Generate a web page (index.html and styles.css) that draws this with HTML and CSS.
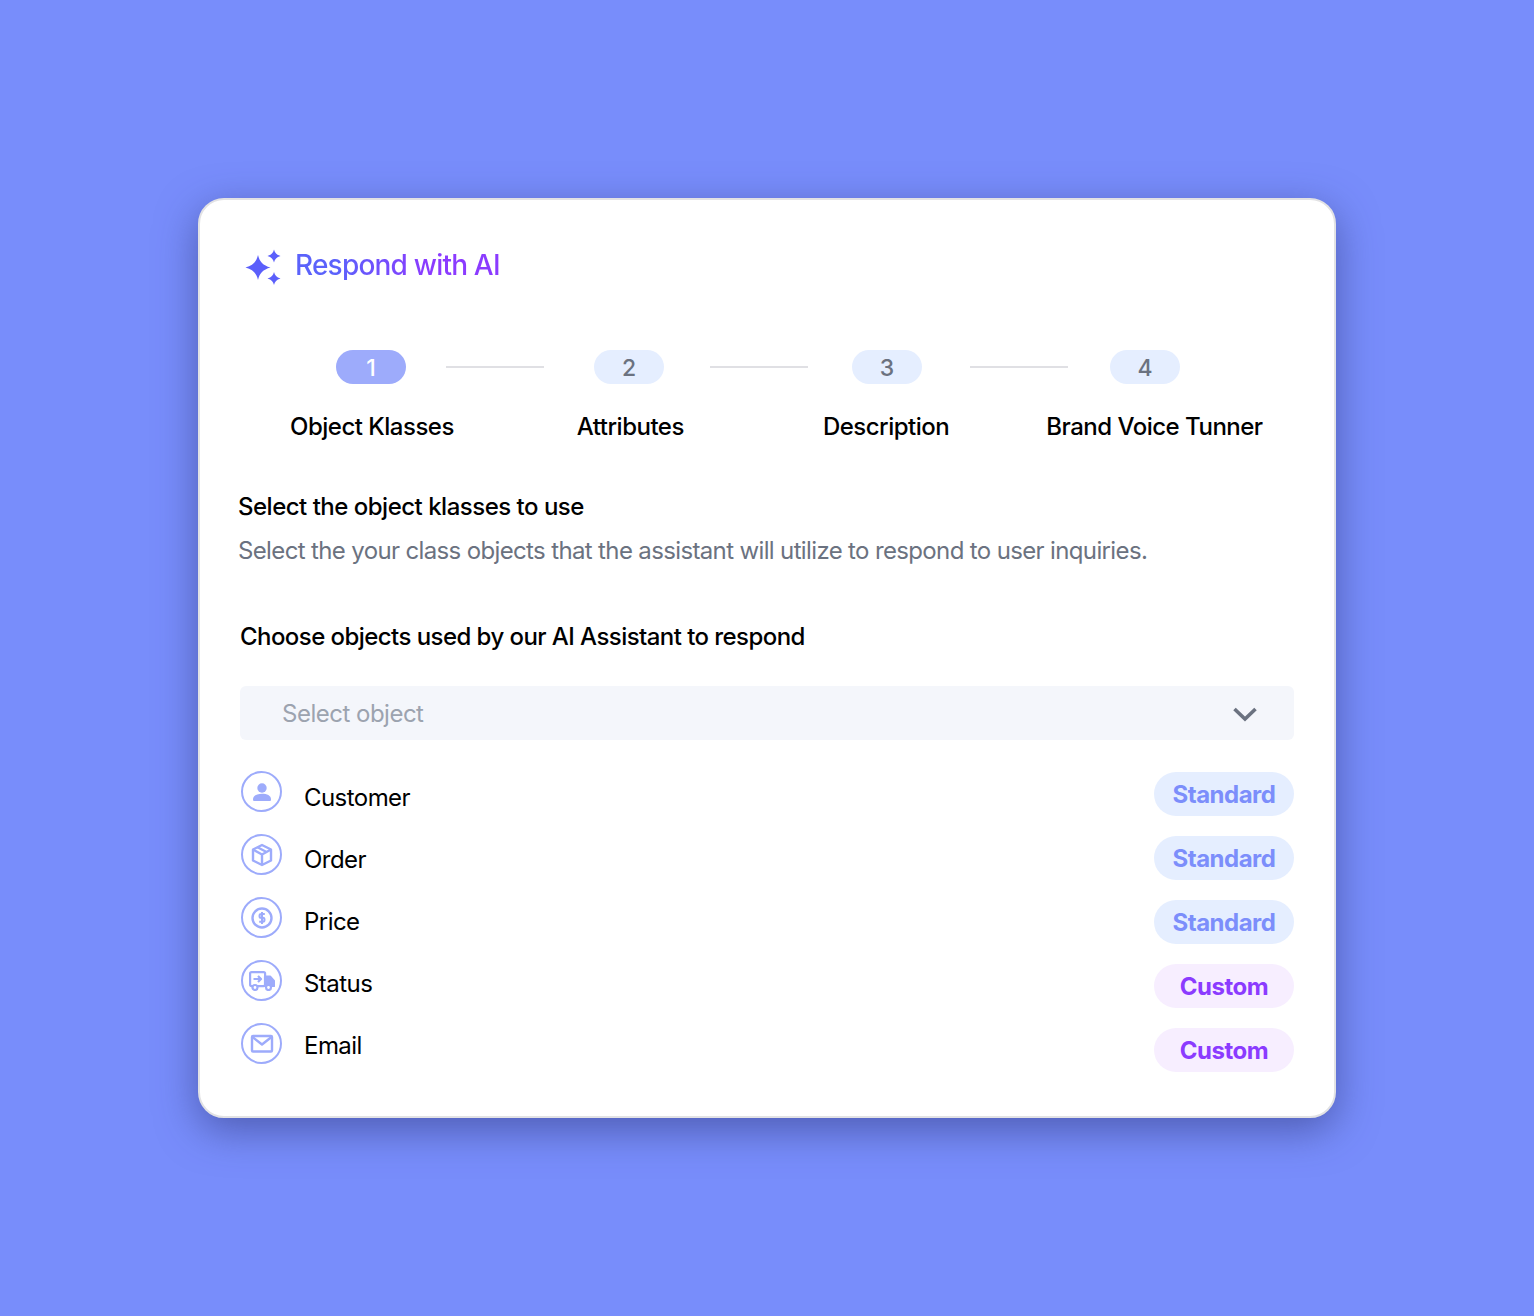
FILE: index.html
```html
<!DOCTYPE html>
<html lang="en">
<head>
  <meta charset="UTF-8" />
  <meta name="viewport" content="width=device-width, initial-scale=1.0" />
  <title>Respond with AI</title>
  <link rel="stylesheet" href="styles.css">
</head>
<body>
  <div class="card">
    <div class="card-head">
      <svg class="sparkle" width="38" height="38" viewBox="0 0 38 38" fill="#5b5ffb">
        <path d="M14 6 C15.500 12.500 19 16.500 26.500 18.500 C19 20.500 15.500 24.500 14 31 C12.500 24.500 9 20.500 1.500 18.500 C9 16.500 12.500 12.500 14 6Z"/>
        <path d="M30 0.500 C30.800 3.800 32.500 5.800 36.500 7 C32.500 8.200 30.800 10.200 30 13.500 C29.200 10.200 27.500 8.200 23.500 7 C27.500 5.800 29.200 3.800 30 0.500Z"/>
        <path d="M30 23 C30.800 26.300 32.500 28.300 36.500 29.500 C32.500 30.700 30.800 32.700 30 36 C29.200 32.700 27.500 30.700 23.500 29.500 C27.500 28.300 29.200 26.300 30 23Z"/>
      </svg>
      <span class="card-title">Respond with AI</span>
    </div>

    <div class="steps">
      <span class="step-num active">1</span>
      <span class="step-line line-a"></span>
      <span class="step-num">2</span>
      <span class="step-line line-b"></span>
      <span class="step-num">3</span>
      <span class="step-line line-c"></span>
      <span class="step-num">4</span>
    </div>
    <div class="step-labels">
      <span>Object Klasses</span>
      <span>Attributes</span>
      <span class="label-3">Description</span>
      <span class="label-4">Brand Voice Tunner</span>
    </div>

    <h2 class="intro-title">Select the object klasses to use</h2>
    <p class="intro-text">Select the your class objects that the assistant will utilize to respond to user inquiries.</p>

    <div class="picker">
      <h3 class="picker-title">Choose objects used by our AI Assistant to respond</h3>
      <div class="select">
        <span>Select object</span>
        <svg class="chevron" width="24" height="15" viewBox="0 0 24 15" fill="none" stroke="#6b7280" stroke-width="3.600">
          <path d="M1.500 2 L12 12 L22.500 2"/>
        </svg>
      </div>

      <div class="objects">
        <div class="object-icons">
          <span class="object-icon">
            <svg width="24" height="24" viewBox="0 0 24 24" fill="#9dabfb">
              <circle cx="12" cy="8" r="4.700"/>
              <path d="M3 19.500 C3 15.500 7 13.800 12 13.800 C17 13.800 21 15.500 21 19.500 C21 20.500 20.500 21 19.500 21 H4.500 C3.500 21 3 20.500 3 19.500Z"/>
            </svg>
          </span>
          <span class="object-icon">
            <svg width="24" height="24" viewBox="0 0 24 24" fill="none" stroke="#9dabfb" stroke-width="2.400" stroke-linejoin="round">
              <path d="M12 2 L21 6.500 V17.500 L12 22 L3 17.500 V6.500Z"/>
              <path d="M3 6.500 L12 11.500 L21 6.500 M12 11.500 V22 M7.500 4.300 L16.500 9"/>
            </svg>
          </span>
          <span class="object-icon">
            <svg width="24" height="24" viewBox="0 0 24 24" fill="none" stroke="#9dabfb" stroke-width="2.400">
              <circle cx="12" cy="12" r="9.500"/>
              <path d="M14.800 8 H11 C9 8 9 11.800 11 11.800 H13 C15 11.800 15 15.800 13 15.800 H9.200 M12 6 V18" stroke-width="2"/>
            </svg>
          </span>
          <span class="object-icon">
            <svg width="26" height="20" viewBox="0 0 26 20" fill="none" stroke="#9dabfb" stroke-width="2.200" stroke-linejoin="round">
              <rect x="1.100" y="1.100" width="15" height="14" rx="1.500"/>
              <path d="M16 5.500 H21 L25 10 V15 H16Z" fill="#9dabfb"/>
              <circle cx="6" cy="16.500" r="2.500" fill="#fff"/>
              <circle cx="19.500" cy="16.500" r="2.500" fill="#fff"/>
              <path d="M4.500 8 H12 M9 5 L12 8 L9 11"/>
            </svg>
          </span>
          <span class="object-icon">
            <svg width="24" height="20" viewBox="0 0 24 20" fill="none" stroke="#9dabfb" stroke-width="2.400" stroke-linejoin="round">
              <rect x="2" y="2" width="20" height="15.500" rx="1"/>
              <path d="M2.500 3 L12 10.500 L21.500 3"/>
            </svg>
          </span>
        </div>

        <ul class="object-names">
          <li>Customer</li>
          <li>Order</li>
          <li>Price</li>
          <li>Status</li>
          <li>Email</li>
        </ul>

        <div class="object-tags">
          <span class="tag">Standard</span>
          <span class="tag">Standard</span>
          <span class="tag">Standard</span>
          <span class="tag custom">Custom</span>
          <span class="tag custom">Custom</span>
        </div>
      </div>
    </div>
  </div>
</body>
</html>
```

FILE: styles.css
```css
body {
  margin: 0;
  height: 1316px;
  background-color: #788dfb;
  font-family: Inter, "Liberation Sans", sans-serif;
  color: #000;
  display: flex;
  justify-content: center;
  align-items: flex-start;
  overflow: hidden;
}

.card {
  box-sizing: border-box;
  width: 1138px;
  height: 920px;
  margin-top: 198px;
  padding: 50px 40px 0 38px;
  background-color: #fff;
  border: 2px solid #e2e2e4;
  border-radius: 26px;
  box-shadow: 0 12px 40px rgba(50, 60, 130, 0.6);
}

.card-head {
  display: flex;
  align-items: flex-start;
  gap: 13px;
  margin-left: 6px;
  height: 38px;
}

.sparkle {
  margin-top: -1px;
}

.card-title {
  font-size: 28px;
  font-weight: 500;
  line-height: 30px;
  letter-spacing: -0.8px;
  background: linear-gradient(90deg, #5b62fb 20%, #8b3bff 65%);
  -webkit-background-clip: text;
  background-clip: text;
  color: transparent;
}

.steps {
  display: flex;
  align-items: center;
  margin-top: 62px;
  margin-left: 98px;
}

.step-num {
  width: 70px;
  height: 34px;
  border-radius: 17px;
  background-color: #e5eeff;
  color: #6b7280;
  font-size: 23px;
  font-weight: 500;
  line-height: 36px;
  text-align: center;
}

.step-num.active {
  background-color: #9dabfb;
  color: #fff;
}

.step-line {
  width: 98px;
  height: 2px;
  background-color: #e0e0e4;
}

.line-a {
  margin: 0 50px 0 40px;
}

.line-b {
  margin: 0 44px 0 46px;
}

.line-c {
  margin: 0 42px 0 48px;
}

.step-labels {
  display: flex;
  gap: 123px;
  margin-top: 27px;
  margin-left: 52px;
  font-size: 24px;
  font-weight: 500;
  line-height: 32px;
  letter-spacing: -0.5px;
  white-space: nowrap;
}

.label-3 {
  margin-left: 16px;
}

.label-4 {
  margin-left: -26px;
}

.intro-title {
  margin: 48px 0 0;
  font-size: 24px;
  font-weight: 500;
  line-height: 32px;
  letter-spacing: -0.5px;
}

.intro-text {
  margin: 12px 0 0;
  font-size: 24px;
  line-height: 32px;
  letter-spacing: -0.64px;
  color: #6b7280;
}

.picker {
  margin-left: 2px;
}

.picker-title {
  margin: 54px 0 0;
  font-size: 24px;
  font-weight: 500;
  line-height: 32px;
  letter-spacing: -0.56px;
}

.select {
  display: flex;
  align-items: center;
  justify-content: space-between;
  height: 54px;
  margin-top: 33px;
  padding: 0 37px 0 42px;
  background-color: #f4f6fb;
  border-radius: 6px;
  font-size: 24px;
  letter-spacing: -0.5px;
  color: #9ca3af;
}

.chevron {
  margin-top: 2px;
}

.objects {
  display: flex;
  align-items: flex-start;
  margin-top: 32px;
}

.object-icons {
  display: flex;
  flex-direction: column;
  gap: 22px;
  margin: -1px 0 0 1px;
}

.object-icon {
  box-sizing: border-box;
  width: 41px;
  height: 41px;
  border: 2px solid #9dabfb;
  border-radius: 50%;
  display: flex;
  align-items: center;
  justify-content: center;
}

.object-names {
  list-style: none;
  flex: 1;
  margin: 10px 0 0 22px;
  padding: 0;
  display: flex;
  flex-direction: column;
  gap: 30px;
  font-size: 24px;
  line-height: 32px;
  letter-spacing: -0.55px;
}

.object-tags {
  display: flex;
  flex-direction: column;
  gap: 20px;
}

.tag {
  width: 140px;
  height: 44px;
  border-radius: 22px;
  background-color: #e5eeff;
  color: #7c8efb;
  font-size: 24px;
  font-weight: 700;
  line-height: 45px;
  letter-spacing: -0.5px;
  text-align: center;
}

.tag.custom {
  background-color: #f7eeff;
  color: #8b3bff;
}
```
